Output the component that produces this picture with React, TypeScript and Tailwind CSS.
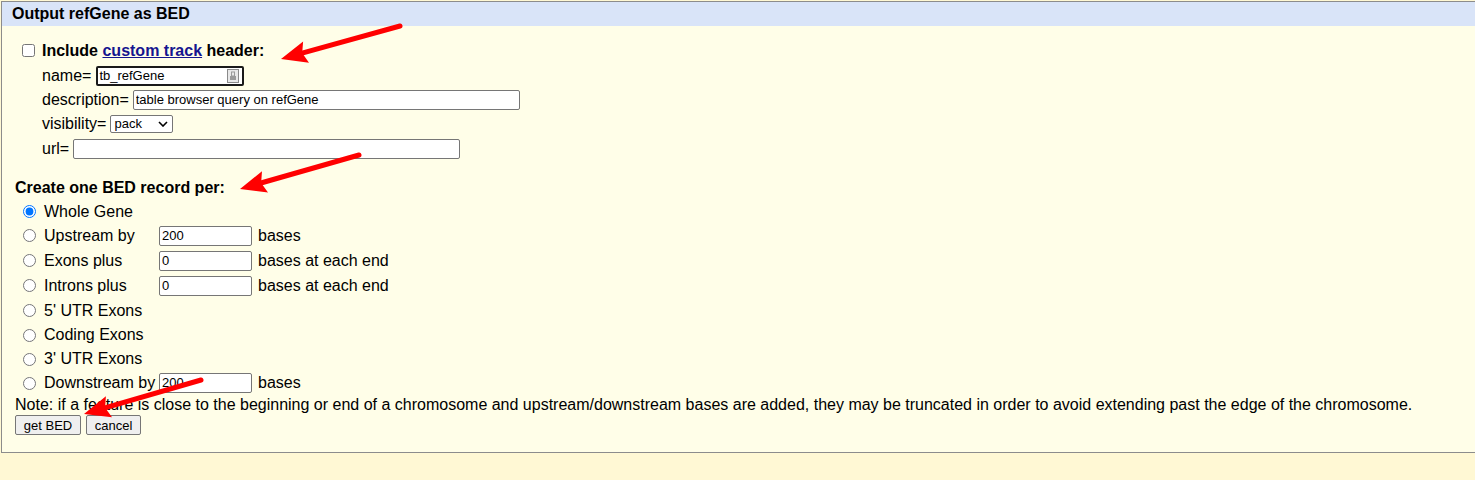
import React from "react";

const F = { fontFamily: '"Liberation Sans", Arial, sans-serif' };

function Arrow({ x1, y1, x2, y2 }: { x1: number; y1: number; x2: number; y2: number }) {
  const dx = x2 - x1;
  const dy = y2 - y1;
  const len = Math.sqrt(dx * dx + dy * dy);
  const ux = dx / len;
  const uy = dy / len;
  const px = -uy;
  const py = ux;
  const hl = 26;
  const hw = 11;
  const bx = x2 - ux * hl;
  const by = y2 - uy * hl;
  const pts = `${x2},${y2} ${bx + px * hw},${by + py * hw} ${bx + ux * 4},${by + uy * 4} ${bx - px * hw},${by - py * hw}`;
  return (
    <g>
      <line x1={x1} y1={y1} x2={bx + ux * 6} y2={by + uy * 6} stroke="#ff0000" strokeWidth={5} strokeLinecap="round" />
      <polygon points={pts} fill="#ff0000" />
    </g>
  );
}

function TextBox({ w, value, focused }: { w: string; value?: string; focused?: boolean }) {
  return (
    <div
      className={`${w} h-[20px] bg-white flex items-center rounded-[2px] ${
        focused ? "border-2 border-[#1a1a1a] px-[1px]" : "border border-[#767676] px-[2px]"
      } text-[13px] text-black`}
    >
      <span className="flex-1 truncate leading-[16px]">{value}</span>
      {focused && (
        <svg width="12" height="14" viewBox="0 0 12 14" className="mr-[2px]">
          <rect x="0.5" y="0.5" width="11" height="13" fill="#e8e8e8" stroke="#8a8a8a" />
          <rect x="3" y="7" width="6" height="4" fill="#9a9a9a" />
          <rect x="4.5" y="3" width="3" height="4" fill="none" stroke="#9a9a9a" />
        </svg>
      )}
    </div>
  );
}

function RadioRow({
  label,
  checked,
  value,
  after,
  h,
}: {
  label: string;
  checked?: boolean;
  value?: string;
  after?: string;
  h: string;
}) {
  return (
    <div className={`flex items-center ${h}`}>
      <input
        type="radio"
        name="bedtype"
        defaultChecked={checked}
        className="ml-[21px] w-[13px] h-[13px] m-0 accent-[#0075ff]"
      />
      <span className="ml-[8px] w-[115px] whitespace-nowrap">{label}</span>
      {value !== undefined && (
        <>
          <TextBox w="w-[93px]" value={value} />
          <span className="ml-[6px]">{after}</span>
        </>
      )}
    </div>
  );
}

export default function App() {
  return (
    <div className="relative w-[1475px] h-[480px] overflow-hidden bg-[#fff8d4] text-[16px] text-black" style={F}>
      <div className="ml-px mt-px w-[1480px] border border-[#8c8c8c] bg-[#fffee8]">
        <div className="h-[24px] bg-[#d9e4f8] flex items-center pl-[10px] font-bold">Output refGene as BED</div>

        <div className="pt-[12px] pb-[17px]">
          <div className="flex items-center h-[25px]">
            <input type="checkbox" className="ml-[20px] w-[13px] h-[13px]" />
            <span className="ml-[7px] font-bold">
              Include{" "}
              <a className="text-[#15158f] underline" href="#">
                custom track
              </a>{" "}
              header:
            </span>
          </div>
          <div className="pl-[40px]">
            <div className="flex items-center h-[25px] gap-[5px]">
              <span>name=</span>
              <TextBox w="w-[148px]" value="tb_refGene" focused />
            </div>
            <div className="flex items-center h-[24px] gap-[4px]">
              <span>description=</span>
              <TextBox w="w-[387px]" value="table browser query on refGene" />
            </div>
            <div className="flex items-center h-[24px] gap-[4px]">
              <span>visibility=</span>
              <div className="w-[63px] h-[18px] bg-white border border-[#767676] rounded-[2px] flex items-center justify-between pl-[3px] pr-[4px] text-[13px]">
                <span>pack</span>
                <svg width="10" height="6" viewBox="0 0 10 6">
                  <path d="M1 1 L5 5 L9 1" fill="none" stroke="#000" strokeWidth="1.6" />
                </svg>
              </div>
            </div>
            <div className="flex items-center h-[25px] gap-[4px]">
              <span>url=</span>
              <TextBox w="w-[387px]" />
            </div>
          </div>

          <div className="mt-[15px] h-[24px] flex items-center pl-[13px] font-bold">Create one BED record per:</div>

          <RadioRow h="h-[23px]" label="Whole Gene" checked />
          <RadioRow h="h-[25px]" label="Upstream by" value="200" after="bases" />
          <RadioRow h="h-[25px]" label="Exons plus" value="0" after="bases at each end" />
          <RadioRow h="h-[25px]" label="Introns plus" value="0" after="bases at each end" />
          <RadioRow h="h-[25px]" label="5' UTR Exons" />
          <RadioRow h="h-[24px]" label="Coding Exons" />
          <RadioRow h="h-[24px]" label="3' UTR Exons" />
          <RadioRow h="h-[24px]" label="Downstream by" value="200" after="bases" />

          <div className="h-[20px] flex items-center pl-[13px] whitespace-nowrap">
            Note: if a feature is close to the beginning or end of a chromosome and upstream/downstream bases are added,
            they may be truncated in order to avoid extending past the edge of the chromosome.
          </div>
          <div className="flex items-center gap-[5px] pl-[13px]">
            <button className="h-[20px] w-[66px] bg-[#efefef] border border-[#767676] rounded-[2px] text-[13px]">get BED</button>
            <button className="h-[20px] w-[55px] bg-[#efefef] border border-[#767676] rounded-[2px] text-[13px]">cancel</button>
          </div>
        </div>
      </div>

      <svg className="absolute inset-0 pointer-events-none" width="1475" height="480">
        <Arrow x1={400} y1={26} x2={281} y2={59} />
        <Arrow x1={359} y1={155} x2={240} y2={189} />
        <Arrow x1={201} y1={380} x2={84} y2={414} />
      </svg>
    </div>
  );
}
